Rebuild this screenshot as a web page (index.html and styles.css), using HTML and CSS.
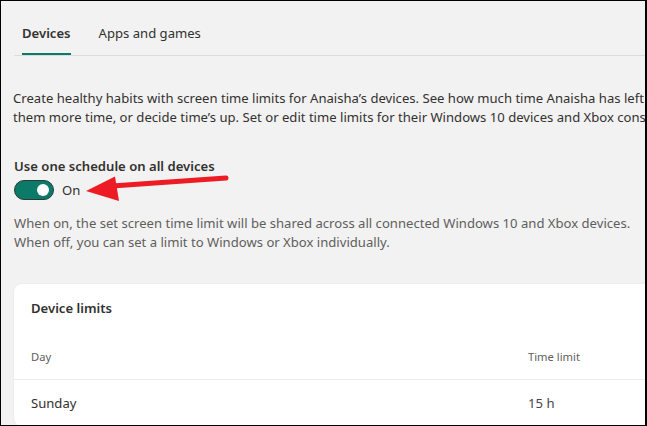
FILE: index.html
```html
<!DOCTYPE html>
<html lang="en">
<head>
<meta charset="utf-8">
<title>Screen time</title>
<link rel="stylesheet" href="styles.css">
</head>
<body>
<div class="frame">
  <nav class="tabs">
    <span class="tab active">Devices</span>
    <span class="tab">Apps and games</span>
  </nav>
  <p class="intro">Create healthy habits with screen time limits for Anaisha’s devices. See how much time Anaisha has left on each device, give<br>them more time, or decide time’s up. Set or edit time limits for their Windows 10 devices and Xbox consoles.</p>
  <div class="schedule">
    <div class="label">Use one schedule on all devices</div>
    <div class="toggle-row">
      <span class="toggle"><span class="knob"></span></span>
      <span class="toggle-text">On</span>
    </div>
    <svg class="arrow" width="160" height="40" viewBox="80 170 160 40" aria-hidden="true">
      <line x1="112" y1="186" x2="226" y2="178" stroke="#ed1c24" stroke-width="5" stroke-linecap="round"/>
      <polygon points="86,191 115,176.5 119,201" fill="#ed1c24"/>
    </svg>
  </div>
  <p class="hint">When on, the set screen time limit will be shared across all connected Windows 10 and Xbox devices.<br>When off, you can set a limit to Windows or Xbox individually.</p>
  <section class="card">
    <h2 class="card-title">Device limits</h2>
    <div class="row head"><span>Day</span><span>Time limit</span></div>
    <div class="row"><span class="day">Sunday</span><span class="val">15 h</span></div>
  </section>
</div>
</body>
</html>
```

FILE: styles.css
```css
* { box-sizing: border-box; }
html, body {
  margin: 0;
  padding: 0;
  width: 647px;
  height: 426px;
  overflow: hidden;
}
body {
  font-family: "Noto Sans", "Open Sans", sans-serif;
  font-size: 13.1px;
  color: #323130;
}
.frame {
  position: relative;
  width: 647px;
  height: 426px;
  overflow: hidden;
  background: #f2f2f2;
  border-style: solid;
  border-color: #000;
  border-width: 1px 2px 1px 1px;
}
.tabs {
  display: flex;
  gap: 28px;
  margin: 22px 0 0 13px;
  padding-left: 8px;
  border-bottom: 1px solid #dcdcdc;
  width: 900px;
}
.tab {
  line-height: 20px;
  padding-bottom: 10px;
  border-bottom: 2px solid transparent;
  white-space: nowrap;
}
.tab.active {
  font-weight: 600;
  border-bottom-color: #0b7a68;
}
.intro {
  margin: 33px 0 0 12px;
  line-height: 19px;
  width: 900px;
  white-space: nowrap;
}
.schedule {
  position: relative;
  margin: 30px 0 0 13px;
}
.label {
  font-weight: 600;
  line-height: 19px;
}
.toggle-row {
  display: flex;
  align-items: center;
  gap: 8px;
  margin-top: 4px;
  height: 20px;
}
.toggle {
  width: 40px;
  height: 20px;
  border-radius: 10px;
  background: #0b7a68;
  border: 1px solid #2b3a37;
  display: flex;
  align-items: center;
  justify-content: flex-end;
  padding-right: 4px;
}
.knob {
  width: 12px;
  height: 12px;
  border-radius: 50%;
  background: #fff;
}
.toggle-text { line-height: 20px; }
.arrow {
  position: absolute;
  left: 66px;
  top: 13px;
}
.hint {
  margin: 14px 0 0 13px;
  line-height: 19px;
  color: #605e5c;
  white-space: nowrap;
}
.card {
  margin: 32px 0 0 13px;
  width: 800px;
  background: #fff;
  border-radius: 8px;
  box-shadow: 0 0 2px rgba(0,0,0,0.08);
  padding-top: 14px;
}
.card-title {
  margin: 0 0 15px 17px;
  font-size: 13.1px;
  font-weight: 600;
  line-height: 20px;
}
.row {
  display: grid;
  grid-template-columns: 497px 1fr;
  align-items: center;
  height: 46px;
  padding-left: 17px;
}
.row.head {
  font-size: 11.2px;
  color: #605e5c;
  border-bottom: 1px solid #edebe9;
  height: 47px;
}
.val { color: #484644; }
```
